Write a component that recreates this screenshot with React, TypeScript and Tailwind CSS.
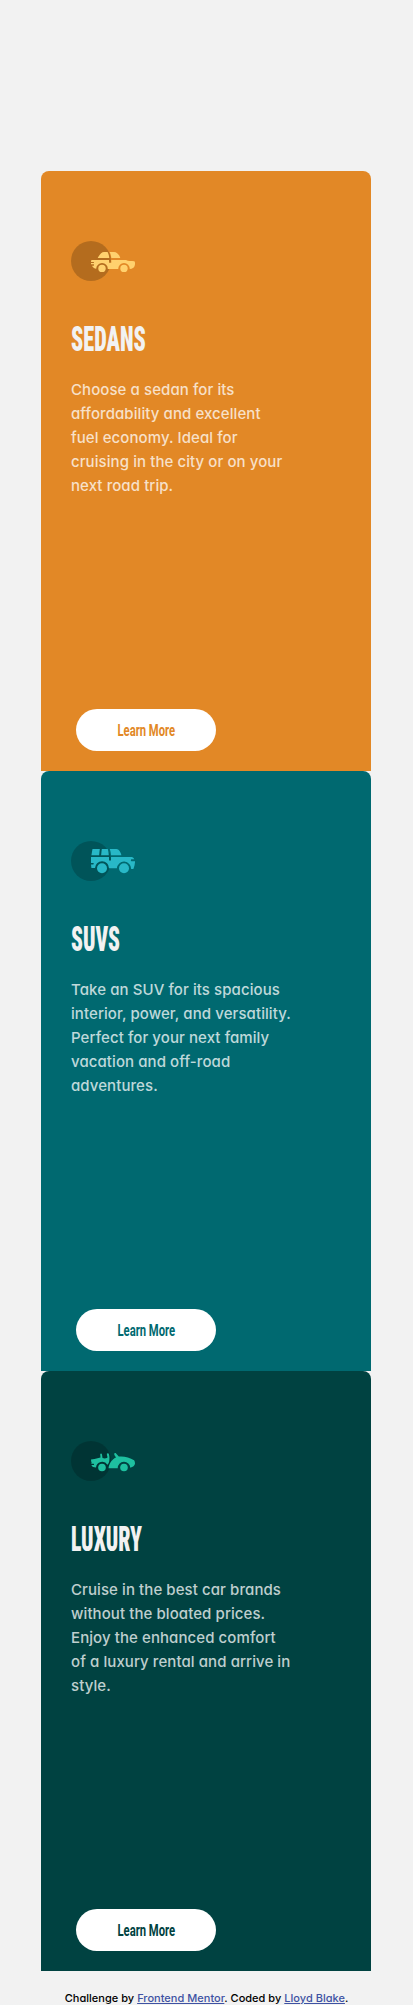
import type { ReactNode } from "react";

type CardProps = {
  title: string;
  titleScale: string;
  lines: string[];
  background: string;
  accent: string;
  icon: ReactNode;
};

function SedanIcon() {
  return (
    <svg width="64" height="40" viewBox="0 0 64 40">
      <circle cx="20" cy="20" r="20" fill="#000" fillOpacity=".2" />
      <g fill="#FFD16E">
        <path d="M26.7 17C28 15 30 11 33 11h3.6c1 1.8 1.5 3.800 1.700 6z" />
        <path d="M38.600 11H43c3 0 5.300 2.800 6.300 6h-9c-.2-2.200-.7-4.300-1.700-6z" />
        <path d="M20.600 19h17.400c.1.900.1 1.800.1 2.700h2.200c0-.9 0-1.800-.1-2.700H55c2 1.200 5.800.8 8.300 1.300 1 .8.900 3.100.3 4.700-.5 1.800-2.200 2.800-4.800 2.900a5.800 5.800 0 0 0-11.600 0H36.800a5.800 5.800 0 0 0-11.600-.2c-1.900-.3-3.400-1.300-4.100-3h1.500c.7 0 .7-1.400 0-1.400H20v-1.200h2.500c.7 0 .7-1.200 0-1.200H20c0-.8.1-1.400.6-1.900z" />
        <circle cx="31" cy="27.400" r="3.700" />
        <circle cx="53" cy="27.400" r="3.700" />
      </g>
    </svg>
  );
}

function SuvIcon() {
  return (
    <svg width="64" height="40" viewBox="0 0 64 40">
      <circle cx="20" cy="20" r="20" fill="#000" fillOpacity=".2" />
      <g fill="#28B8C7">
        <path d="M21.500 8h7.300l-.7 6.300h-7.700z" />
        <path d="M30.800 8h6c.6 2 .9 4.100 1 6.300h-7.700z" />
        <path d="M38.800 8h6.700c2.300 0 4.300 3.100 4.900 6.300H40c-.1-2.200-.5-4.300-1.200-6.300z" />
        <path d="M20 16h18v3.600h2V16h20.500c1.500.2 2.300 1 2.800 2.200h-2.500c-1.300 0-1.300 2 0 2H64c.1 2.600-.5 5.300-1.600 7.800h-2.300a7.100 7.100 0 0 0-14.200-.7H38a7 7 0 0 0-14-.2h-3.600L20 23.500h2c1.100 0 1.100-1.600 0-1.600h-2z" />
        <circle cx="31" cy="27.200" r="5" />
        <circle cx="53" cy="27.200" r="5" />
      </g>
    </svg>
  );
}

function LuxuryIcon() {
  return (
    <svg width="64" height="40" viewBox="0 0 64 40">
      <circle cx="20" cy="20" r="20" fill="#000" fillOpacity=".2" />
      <g fill="#1EC0A0">
        <path d="M20 18.500l3.500-.5 6-1.500-.3-3c.1-1.200 1.500-1.200 1.800 0l.5 3.500c1.500.5 3 .6 4.300 0 .9-.4.8-1.500.3-2.300l-.3-1.900c.3-.9 1.700-.9 2 0 .8 2.800.9 5.500.3 8.200-.3 1.200-.9 2.100-1.700 2.700A6.200 6.200 0 0 0 25 26.500c-2.200-.1-4-.7-4.600-2.500h2.200c.7 0 .7-1.200 0-1.200H20.200l.4-1.100c-.4-1-.6-2-.6-3.200z" />
        <path d="M43.200 13.200c0-1.200 1.300-1.500 1.900-.7l2.700 3.100c5.200-.5 10.800.7 15.300 3.700.6.800.9 2.200.9 3.500-.4 1.900-2 3.300-4.700 4a6.300 6.300 0 0 0-12.600.4H37.500c.6-4.200 2.800-8.400 7.700-10.900-.9-.6-1.600-1.800-2-3.100z" />
        <circle cx="31" cy="26.500" r="3.800" />
        <circle cx="53" cy="26.500" r="3.800" />
      </g>
    </svg>
  );
}

function Card({ title, titleScale, lines, background, accent, icon }: CardProps) {
  return (
    <section className={`flex h-[600px] flex-col items-start rounded-t-lg px-[30px] pt-[70px] pb-5 ${background}`}>
      {icon}
      <h2 className={`mt-[38px] origin-left font-[Roboto,sans-serif] text-[35.5px] leading-[40px] font-black text-[#f2f2f2] [font-stretch:75%] ${titleScale}`}>
        {title}
      </h2>
      <p className="mt-[19px] font-[Inter,sans-serif] text-[15px] leading-6 font-medium tracking-[0.08px] whitespace-nowrap text-white/75 [font-feature-settings:'cv11']">
        {lines.map((line) => (
          <span key={line} className="block">
            {line}
          </span>
        ))}
      </p>
      <button className={`mt-auto ml-[5px] flex h-[42px] w-[140px] items-center justify-center rounded-full bg-white ${accent}`}>
        <span className="inline-block scale-x-[.65] font-[Roboto,sans-serif] text-[17.3px] leading-5 font-bold whitespace-nowrap">
          Learn More
        </span>
      </button>
    </section>
  );
}

export default function App() {
  return (
    <div className="h-[2005px] overflow-hidden bg-[#f2f2f2] pt-[171px]">
      <main className="ml-[41px] flex w-[330px] flex-col">
        <Card
          title="SEDANS"
          titleScale="scale-x-[.628]"
          background="bg-[#e28826]"
          accent="text-[#e28826]"
          icon={<SedanIcon />}
          lines={["Choose a sedan for its", "affordability and excellent", "fuel economy. Ideal for", "cruising in the city or on your", "next road trip."]}
        />
        <Card
          title="SUVS"
          titleScale="scale-x-[.61]"
          background="bg-[#006970]"
          accent="text-[#006970]"
          icon={<SuvIcon />}
          lines={["Take an SUV for its spacious", "interior, power, and versatility.", "Perfect for your next family", "vacation and off-road", "adventures."]}
        />
        <Card
          title="LUXURY"
          titleScale="scale-x-[.61]"
          background="bg-[#004241]"
          accent="text-[#004241]"
          icon={<LuxuryIcon />}
          lines={["Cruise in the best car brands", "without the bloated prices.", "Enjoy the enhanced comfort", "of a luxury rental and arrive in", "style."]}
        />
      </main>
      <footer className="mt-[19px] text-center font-[Inter,sans-serif] text-[11px] leading-4 font-medium tracking-[0.02px] text-black [font-feature-settings:'cv11']">
        Challenge by <a className="text-[#3e52a3] underline">Frontend Mentor</a>. Coded by{" "}
        <a className="text-[#3e52a3] underline">Lloyd Blake</a>.
      </footer>
    </div>
  );
}
